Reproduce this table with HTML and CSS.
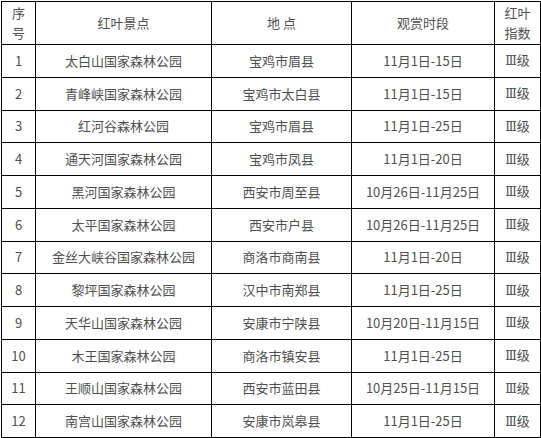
FILE: index.html
```html
<!DOCTYPE html>
<html lang="zh">
<head>
<meta charset="utf-8">
<link rel="stylesheet" href="styles.css">
</head>
<body>
<table class="tbl">
  <colgroup>
    <col class="c1"><col class="c2"><col class="c3"><col class="c4"><col class="c5">
  </colgroup>
  <thead>
    <tr class="head"><td>序<br>号</td><td>红叶景点</td><td>地 点</td><td>观赏时段</td><td>红叶<br>指数</td></tr>
  </thead>
  <tbody>
    <tr><td>1</td><td>太白山国家森林公园</td><td>宝鸡市眉县</td><td>11月1日-15日</td><td><span class="rn">Ⅲ</span>级</td></tr>
    <tr><td>2</td><td>青峰峡国家森林公园</td><td>宝鸡市太白县</td><td>11月1日-15日</td><td><span class="rn">Ⅲ</span>级</td></tr>
    <tr><td>3</td><td>红河谷森林公园</td><td>宝鸡市眉县</td><td>11月1日-25日</td><td><span class="rn">Ⅲ</span>级</td></tr>
    <tr><td>4</td><td>通天河国家森林公园</td><td>宝鸡市凤县</td><td>11月1日-20日</td><td><span class="rn">Ⅲ</span>级</td></tr>
    <tr><td>5</td><td>黑河国家森林公园</td><td>西安市周至县</td><td>10月26日-11月25日</td><td><span class="rn">Ⅲ</span>级</td></tr>
    <tr><td>6</td><td>太平国家森林公园</td><td>西安市户县</td><td>10月26日-11月25日</td><td><span class="rn">Ⅲ</span>级</td></tr>
    <tr><td>7</td><td>金丝大峡谷国家森林公园</td><td>商洛市商南县</td><td>11月1日-20日</td><td><span class="rn">Ⅲ</span>级</td></tr>
    <tr><td>8</td><td>黎坪国家森林公园</td><td>汉中市南郑县</td><td>11月1日-25日</td><td><span class="rn">Ⅲ</span>级</td></tr>
    <tr><td>9</td><td>天华山国家森林公园</td><td>安康市宁陕县</td><td>10月20日-11月15日</td><td><span class="rn">Ⅲ</span>级</td></tr>
    <tr><td>10</td><td>木王国家森林公园</td><td>商洛市镇安县</td><td>11月1日-25日</td><td><span class="rn">Ⅲ</span>级</td></tr>
    <tr><td>11</td><td>王顺山国家森林公园</td><td>西安市蓝田县</td><td>10月25日-11月15日</td><td><span class="rn">Ⅲ</span>级</td></tr>
    <tr><td>12</td><td>南宫山国家森林公园</td><td>安康市岚皋县</td><td>11月1日-25日</td><td><span class="rn">Ⅲ</span>级</td></tr>
  </tbody>
</table>
</body>
</html>
```
FILE: styles.css
```css
html, body {
  margin: 0;
  padding: 0;
  background: #fff;
}
body {
  padding: 1px 0 0 1px;
  font-family: "Noto Sans CJK SC", "Noto Sans", sans-serif;
  font-size: 13px;
  color: #505050;
}
.tbl {
  border-collapse: collapse;
  table-layout: fixed;
  width: 540px;
}
.c1 { width: 34px; }
.c2 { width: 176px; }
.c3 { width: 140px; }
.c4 { width: 143px; }
.c5 { width: 46px; }
.tbl td {
  border: 1px solid #000;
  text-align: center;
  vertical-align: middle;
  padding: 0;
  line-height: 20px;
  height: 32.75px;
  box-sizing: border-box;
}
.tbl .head td {
  height: 43px;
}
.rn {
  font-family: "DejaVu Serif", "Liberation Serif", serif;
  font-size: 12px;
}
```
